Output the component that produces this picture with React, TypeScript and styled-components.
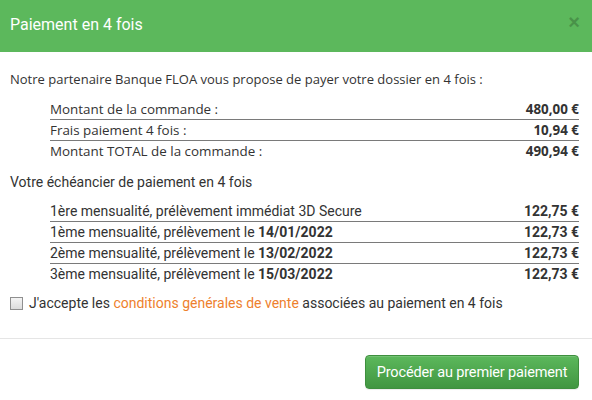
import React from "react";
import styled, { createGlobalStyle } from "styled-components";

const Global = createGlobalStyle`
  html, body { margin: 0; padding: 0; background: #fff; }
  body { font-family: Roboto, "Liberation Sans", sans-serif; color: #333; }
  * { box-sizing: border-box; }
`;

const Modal = styled.div`
  width: 592px;
  height: 400px;
  background: #fff;
  display: flex;
  flex-direction: column;
`;

const Header = styled.div`
  height: 52px;
  background: #5cb85c;
  display: flex;
  align-items: center;
  justify-content: space-between;
  padding: 0 12px 4px 10px;
`;

const Title = styled.h4`
  margin: 0;
  font-family: Roboto, sans-serif;
  font-weight: 400;
  font-size: 16px;
  color: #fff;
`;

const Close = styled.span`
  font-family: "Liberation Sans", Arial, sans-serif;
  font-weight: 700;
  font-size: 20px;
  line-height: 1;
  color: #000;
  opacity: 0.2;
  margin-top: -4px;
`;

const Body = styled.div`
  padding: 17px 13px 25px 10px;
  border-bottom: 1px solid #e5e5e5;
`;

const Intro = styled.p`
  margin: 0;
  font-family: "Open Sans", sans-serif;
  font-size: 13px;
  line-height: 20px;
`;

const SectionTitle = styled.p`
  margin: 11px 0 0;
  font-family: Roboto, sans-serif;
  font-size: 14px;
  line-height: 20px;
`;

const Table = styled.div<{ $serif?: boolean }>`
  margin: ${(p) => (p.$serif ? "10px" : "9px")} 0 0 40px;
  display: flex;
  flex-direction: column;
  font-family: ${(p) => (p.$serif ? '"Open Sans", sans-serif' : "Roboto, sans-serif")};
  font-size: ${(p) => (p.$serif ? "13.4px" : "14px")};
`;

const Row = styled.div`
  display: flex;
  justify-content: space-between;
  align-items: center;
  height: 21px;
  line-height: 20px;
  border-bottom: 1px solid #7a7a7a;
  &:last-child { border-bottom: none; height: 20px; }
`;

const Amount = styled.span`
  font-weight: 700;
`;

const Accept = styled.label`
  margin-top: 9px;
  display: flex;
  align-items: center;
  gap: 6px;
  height: 20px;
  font-family: Roboto, sans-serif;
  font-size: 14px;
`;

const Box = styled.input`
  appearance: none;
  width: 13px;
  height: 13px;
  margin: 0;
  border: 1px solid #8f8f8f;
  background: linear-gradient(#f4f4f4, #dcdcdc);
`;

const Link = styled.a`
  color: #ee7f2d;
  text-decoration: none;
`;

const Footer = styled.div`
  display: flex;
  justify-content: flex-end;
  padding: 16px 13px 0 0;
`;

const Button = styled.button`
  width: 214px;
  height: 34px;
  border: 1px solid #3e8f3e;
  border-radius: 4px;
  background: linear-gradient(#5cb85c, #419641);
  color: #fff;
  font-family: Roboto, sans-serif;
  font-size: 14.5px;
  letter-spacing: -0.15px;
  box-shadow: inset 0 1px 0 rgba(255,255,255,.15), 0 1px 1px rgba(0,0,0,.075);
`;

const recap = [
  ["Montant de la commande :", "480,00 €"],
  ["Frais paiement 4 fois :", "10,94 €"],
  ["Montant TOTAL de la commande :", "490,94 €"],
];

const schedule: [string, string | null, string][] = [
  ["1ère mensualité, prélèvement immédiat 3D Secure", null, "122,75 €"],
  ["1ème mensualité, prélèvement le ", "14/01/2022", "122,73 €"],
  ["2ème mensualité, prélèvement le ", "13/02/2022", "122,73 €"],
  ["3ème mensualité, prélèvement le ", "15/03/2022", "122,73 €"],
];

export default function App() {
  return (
    <>
      <Global />
      <Modal>
        <Header>
          <Title>Paiement en 4 fois</Title>
          <Close>×</Close>
        </Header>
        <Body>
          <Intro>Notre partenaire Banque FLOA vous propose de payer votre dossier en 4 fois :</Intro>
          <Table $serif>
            {recap.map(([l, v]) => (
              <Row key={l}>
                <span>{l}</span>
                <Amount>{v}</Amount>
              </Row>
            ))}
          </Table>
          <SectionTitle>Votre échéancier de paiement en 4 fois</SectionTitle>
          <Table>
            {schedule.map(([l, d, v], i) => (
              <Row key={i}>
                <span>
                  {l}
                  {d && <Amount>{d}</Amount>}
                </span>
                <Amount>{v}</Amount>
              </Row>
            ))}
          </Table>
          <Accept>
            <Box type="checkbox" />
            <span>
              J'accepte les <Link>conditions générales de vente</Link> associées au paiement en 4 fois
            </span>
          </Accept>
        </Body>
        <Footer>
          <Button>Procéder au premier paiement</Button>
        </Footer>
      </Modal>
    </>
  );
}
